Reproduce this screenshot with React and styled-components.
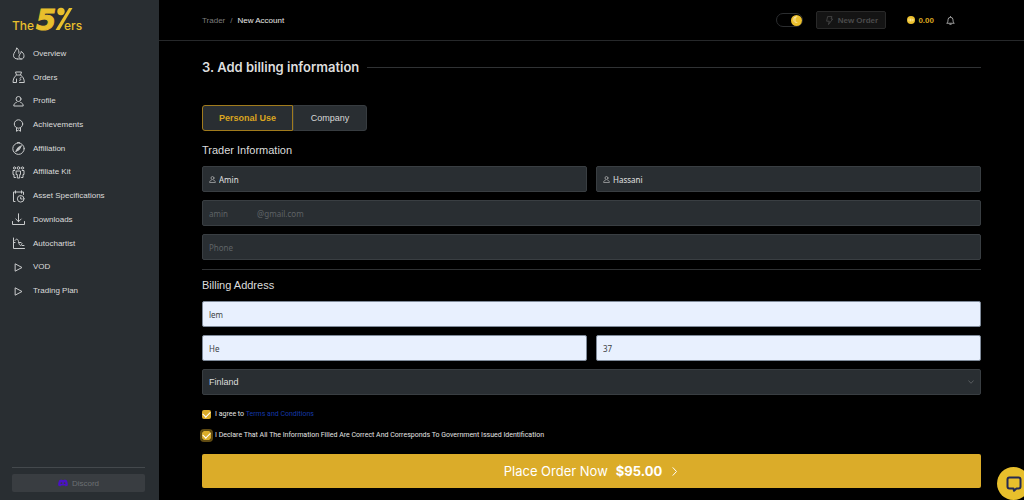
import styled, { createGlobalStyle } from "styled-components";
import { useState } from "react";

const GlobalStyle = createGlobalStyle`
  * {
    box-sizing: border-box;
  }
  body {
    margin: 0;
    background: #000;
    color: #dcdcdc;
    font-family: "Liberation Sans", Arial, sans-serif;
    font-size: 8px;
    overflow-x: hidden;
  }
  button, input, select {
    font-family: inherit;
    margin: 0;
  }
`;

const Page = styled.div`
  display: flex;
  min-height: 100vh;
`;

/* sidebar */
const Sidebar = styled.aside`
  width: 159px;
  flex-shrink: 0;
  display: flex;
  flex-direction: column;
  background: #292e32;
  padding: 0 14px 8px 12px;
`;
const Logo = styled.svg`
  width: 76px;
  height: 38px;
  display: block;
  fill: #e8bf2c;
  font-family: Inter, sans-serif;
`;
const Menu = styled.nav`
  display: grid;
  grid-template-rows: repeat(11, 1fr);
  height: 261px;
  margin-top: 4px;
`;
const MenuLink = styled.a`
  display: flex;
  align-items: center;
  gap: 8px;
  color: #dcdcdc;
  text-decoration: none;
  line-height: 12px;
`;
const MenuIcon = styled.svg`
  width: 13px;
  height: 13px;
  fill: none;
  stroke: #c9cbcc;
  stroke-width: 1;
  stroke-linecap: round;
  stroke-linejoin: round;
`;
const SidebarFooter = styled.div`
  margin-top: auto;
  padding-top: 6px;
  border-top: 1px solid #44494d;
`;
const DiscordButton = styled.button`
  width: 100%;
  height: 18px;
  display: flex;
  align-items: center;
  justify-content: center;
  gap: 4px;
  border: none;
  border-radius: 2px;
  background: #393d41;
  color: #6c7073;
  font-size: 8px;
`;
const DiscordIcon = styled.svg`
  width: 10px;
  height: 8px;
  fill: #4a12c4;
`;

/* header */
const Content = styled.div`
  flex: 1;
  min-width: 0;
`;
const Header = styled.header`
  height: 41px;
  display: flex;
  align-items: center;
  justify-content: space-between;
  border-bottom: 1px solid #26282a;
  padding: 0 69px 0 43px;
`;
const Breadcrumb = styled.nav`
  display: flex;
  gap: 5px;
  color: #7c7c7c;
`;
const Crumb = styled.a`
  color: ${(props) => (props.$current ? "#e8e8e8" : "#7c7c7c")};
  text-decoration: none;
`;
const HeaderActions = styled.div`
  display: flex;
  align-items: center;
`;
const ThemeSwitch = styled.input`
  appearance: none;
  width: 27px;
  height: 14px;
  display: flex;
  align-items: center;
  justify-content: flex-start;
  border: 1px solid #2b2d2f;
  border-radius: 7px;
  &:checked {
    justify-content: flex-end;
  }
  &::after {
    content: "☾";
    width: 11px;
    height: 11px;
    border-radius: 50%;
    background: #ecc02d;
    color: #fff;
    font: bold 9px/11px "DejaVu Sans", sans-serif;
    text-align: center;
  }
`;
const NewOrderButton = styled.button`
  width: 70px;
  height: 18px;
  margin: 0 21px 0 13px;
  padding: 0;
  display: flex;
  align-items: center;
  justify-content: center;
  gap: 4px;
  border: 1px solid #292929;
  border-radius: 2px;
  background: #141414;
  color: #4b4b4b;
  font-size: 8px;
  font-weight: 600;
`;
const SmallIcon = styled.svg`
  width: ${(props) => props.$size || 9}px;
  height: ${(props) => props.$size || 9}px;
  flex-shrink: 0;
  fill: none;
  stroke: currentColor;
  stroke-linecap: round;
  stroke-linejoin: round;
`;
const Balance = styled.span`
  display: flex;
  align-items: center;
  gap: 3px;
  margin-right: 12px;
  color: #dba51f;
  font-weight: 600;
`;
const BellButton = styled.button`
  display: flex;
  padding: 0;
  border: none;
  background: none;
  color: #c4c4c4;
`;

/* form */
const Form = styled.form`
  padding: 16px 43px 12px;
`;
const PageTitle = styled.h1`
  display: flex;
  align-items: center;
  gap: 8px;
  margin: 0 0 28px;
  font-family: Inter, sans-serif;
  font-size: 13px;
  line-height: 20px;
  font-weight: 600;
  color: #dedede;
  &::after {
    content: "";
    flex: 1;
    height: 1px;
    background: #303234;
  }
`;
const Tabs = styled.div`
  display: flex;
  margin-bottom: 11px;
`;
const Tab = styled.button`
  width: ${(props) => (props.$first ? 91 : 74)}px;
  height: 26px;
  padding: 0;
  border: 1px solid ${(props) => (props.$active ? "#a07b1d" : "#373c40")};
  border-radius: ${(props) => (props.$first ? "3px 0 0 3px" : "0 3px 3px 0")};
  background: #292e32;
  color: ${(props) => (props.$active ? "#dba51f" : "#d8d8d8")};
  font-size: 9px;
  font-weight: ${(props) => (props.$active ? 600 : 400)};
`;
const SectionTitle = styled.h2`
  margin: 0 0 8px;
  font-size: 11px;
  line-height: 16px;
  font-weight: 400;
  color: #dcdcdc;
`;
const Fields = styled.div`
  display: grid;
  grid-template-columns: 1fr 1fr;
  gap: 8px 9px;
`;
const Field = styled.div`
  grid-column: ${(props) => (props.$wide ? "1 / -1" : "auto")};
  display: flex;
  align-items: center;
  gap: 3px;
  height: 26px;
  padding: 0 6px;
  border: 1px solid ${(props) => (props.$filled ? "#7f8a99" : "#393e42")};
  border-radius: 2px;
  background: ${(props) => (props.$filled ? "#e8f0fe" : "#292e32")};
  color: #a9abac;
`;
const Input = styled.input`
  flex: 1;
  min-width: 0;
  height: 22px;
  padding: 0;
  border: none;
  outline: none;
  background: none;
  color: ${(props) => props.$color || "#e0e0e0"};
  font-family: "Noto Sans", "Open Sans", sans-serif;
  font-size: 8px;
  &::placeholder {
    color: #5f6366;
  }
`;
const Select = styled.select`
  flex: 1;
  appearance: none;
  border: none;
  outline: none;
  padding: 0;
  background: none;
  color: #dcdcdc;
  font-size: 9px;
`;
const Divider = styled.hr`
  margin: 9px 0 7px;
  border: none;
  height: 1px;
  background: #303234;
`;
const Agreements = styled.div`
  display: flex;
  flex-direction: column;
  gap: 9px;
  margin: 13px 0;
`;
const Agreement = styled.label`
  display: flex;
  align-items: center;
  gap: 4px;
  line-height: 12px;
  font-family: Roboto, sans-serif;
  font-size: 7px;
  color: #e4e4e4;
`;
const Checkbox = styled.input`
  appearance: none;
  width: 9px;
  height: 9px;
  flex-shrink: 0;
  display: grid;
  place-items: center;
  border-radius: 2px;
  background: #dbac29;
  outline: ${(props) => (props.$focused ? "2px solid #5f4a12" : "none")};
  &:checked::after {
    content: "";
    width: 4px;
    height: 6px;
    margin-bottom: 1px;
    border: solid #fff;
    border-width: 0 1px 1px 0;
    transform: rotate(45deg);
  }
`;
const TermsLink = styled.a`
  color: #1439a8;
  text-decoration: none;
`;
const PlaceOrderButton = styled.button`
  width: 100%;
  height: 34px;
  padding: 0;
  display: flex;
  align-items: center;
  justify-content: center;
  gap: 8px;
  border: none;
  border-radius: 2px;
  background: #dbac29;
  color: #fff;
  font-family: Inter, sans-serif;
  font-size: 13px;
`;
const Price = styled.strong`
  font-weight: 700;
`;
const ChatButton = styled.button`
  position: fixed;
  right: -6px;
  bottom: 0;
  width: 33px;
  height: 33px;
  padding: 0;
  display: flex;
  align-items: center;
  justify-content: center;
  border: none;
  border-radius: 50%;
  background: #e8bf2c;
  color: #252a52;
`;

const menuItems = [
  {
    label: "Overview",
    icon: (
      <path d="M5.500 12C3 12 1.500 10.600 1.500 8.300C1.500 5.500 4.500 4 4.700 .8C6.500 2.300 7.300 4.500 6.900 6.300M5.500 12H9.500C11.300 12 12 10.500 12 8.800C12 6.800 10.500 5 9 4.500C9.500 6.500 7 7 7 9.500C7 10.800 7.700 12 9.500 12" />
    ),
  },
  {
    label: "Orders",
    icon: (
      <path d="M4.500 4L3.500 1H9.500L8.500 4H4.500C2.500 5.500 1 8 1 11.500H4.500V8M8.500 4C11 5.500 12.300 8 12.300 11.500H7.500M9 6.500C8 6.500 7.500 7.500 8.300 8C9 8.500 9 9.500 7.500 9.300" />
    ),
  },
  {
    label: "Profile",
    icon: (
      <>
        <circle cx="6.500" cy="4" r="2.500" />
        <path d="M4.300 7.500C2.500 8 1.800 9.300 1.800 11H11.200C11.200 9.300 10.500 8 8.700 7.500" />
      </>
    ),
  },
  {
    label: "Achievements",
    icon: (
      <>
        <circle cx="6.500" cy="5" r="4.200" />
        <path d="M4.500 9V12.300L6.500 11L8.500 12.300V9" />
      </>
    ),
  },
  {
    label: "Affiliation",
    icon: (
      <>
        <circle cx="6.500" cy="6.700" r="5.700" />
        <path d="M9.300 4L7.300 7.600L3.700 9.600L5.700 6Z" fill="#c9cbcc" />
        <path d="M5.500 .6H7.500" />
      </>
    ),
  },
  {
    label: "Affiliate Kit",
    icon: (
      <>
        <circle cx="2.500" cy="2" r="1.100" />
        <circle cx="6.500" cy="2" r="1.300" />
        <circle cx="10.500" cy="2" r="1.100" />
        <path d="M2.800 4.500H1V8.500H2V11.500H3.500M10.200 4.500H12V8.500H11V11.500H9.500M4.500 5H8.500V8.500H7.700V12H5.300V8.500H4.500Z" />
      </>
    ),
  },
  {
    label: "Asset Specifications",
    icon: (
      <>
        <path d="M3 11.500H1.500V2H11.500V4.500M3.500 .8V3.200M9.500 .8V3.200" />
        <circle cx="8.700" cy="8.800" r="3.300" />
        <path d="M8.700 7V9H10.200" />
      </>
    ),
  },
  {
    label: "Downloads",
    icon: <path d="M.5 8.500V11.500H12.500V8.500M6.500 .8V8.500M3.800 6L6.500 8.700L9.200 6" />,
  },
  {
    label: "Autochartist",
    icon: (
      <path d="M1.500 1V11.500H12.500M1.500 5.500H3M3 3.500C4 1.500 6 1.500 6.500 4.500C7 8 8.500 9.500 9.500 7.500L10 6.500M7 5.500H9M10 8.500H12" />
    ),
  },
  { label: "VOD", icon: <path d="M3.500 3L10 6.500L3.500 10Z" /> },
  { label: "Trading Plan", icon: <path d="M3.500 3L10 6.500L3.500 10Z" /> },
];

const UserIcon = () => (
  <SmallIcon viewBox="0 0 8 8" $size={7} strokeWidth="0.9">
    <circle cx="4" cy="2.300" r="1.700" />
    <path d="M2.700 4.700C1.400 5 .7 6 .7 7.400H7.300C7.300 6 6.600 5 5.300 4.700" />
  </SmallIcon>
);

const App = () => {
  const [accountType, setAccountType] = useState("personal");

  return (
    <>
      <GlobalStyle />
      <Page>
        <Sidebar>
          <Logo viewBox="0 0 76 38" role="img" aria-label="The 5%ers">
            <text x="0" y="30" fontSize="12" fontWeight="500">
              The
            </text>
            <text
              x="24"
              y="30"
              fontSize="29"
              fontWeight="700"
              fontStyle="italic"
              fontFamily="DejaVu Sans, sans-serif"
              stroke="#e8bf2c"
              strokeWidth="1"
            >
              5
            </text>
            <circle cx="49" cy="11.500" r="3.700" />
            <path d="M57 8H60.500L47.500 30H43.500Z" />
            <text x="52" y="30" fontSize="12" fontWeight="500">
              ers
            </text>
          </Logo>
          <Menu>
            {menuItems.map((item) => (
              <MenuLink href="#" key={item.label}>
                <MenuIcon viewBox="0 0 13 13">{item.icon}</MenuIcon>
                {item.label}
              </MenuLink>
            ))}
          </Menu>
          <SidebarFooter>
            <DiscordButton type="button">
              <DiscordIcon viewBox="0 0 10 8">
                <path
                  fillRule="evenodd"
                  d="M3.500 .5L3.800 1H6.200L6.500 .5L8.500 1C9.600 2.800 10 4.600 9.800 6.500L7.700 7.500L7 6.500H3L2.300 7.500L.2 6.500C0 4.600 .4 2.800 1.500 1ZM3.400 3.300A.9 .9 0 1 0 3.400 5.100A.9 .9 0 1 0 3.400 3.300ZM6.600 3.300A.9 .9 0 1 0 6.600 5.100A.9 .9 0 1 0 6.600 3.300Z"
                />
              </DiscordIcon>
              Discord
            </DiscordButton>
          </SidebarFooter>
        </Sidebar>

        <Content>
          <Header>
            <Breadcrumb>
              <Crumb href="#">Trader</Crumb>
              <span>/</span>
              <Crumb href="#" $current>
                New Account
              </Crumb>
            </Breadcrumb>
            <HeaderActions>
              <ThemeSwitch type="checkbox" aria-label="Dark mode" defaultChecked />
              <NewOrderButton type="button">
                <SmallIcon viewBox="0 0 9 9" strokeWidth="0.8">
                  <path d="M3 .6H7L6 3H7.700L3.500 8.500L4.300 5.200H2Z" />
                </SmallIcon>
                New Order
              </NewOrderButton>
              <Balance>
                <SmallIcon viewBox="0 0 8 8" $size={8}>
                  <circle cx="4" cy="4" r="4" fill="#ecc02d" stroke="none" />
                  <path d="M2 3V5M3.500 3V5M5 3V5M6 3.500V4.500" stroke="#fff3c4" strokeWidth="0.7" />
                </SmallIcon>
                0.00
              </Balance>
              <BellButton type="button" aria-label="Notifications">
                <SmallIcon viewBox="0 0 9 9" strokeWidth="0.8">
                  <path d="M1 7C1.800 6.300 2 5.500 2 3.800A2.500 2.500 0 0 1 7 3.800C7 5.500 7.200 6.300 8 7ZM3.800 8.300H5.200M4.500 .5V1" />
                </SmallIcon>
              </BellButton>
            </HeaderActions>
          </Header>

          <Form onSubmit={(e) => e.preventDefault()}>
            <PageTitle>3. Add billing information</PageTitle>
            <Tabs>
              <Tab
                type="button"
                $first
                $active={accountType === "personal"}
                onClick={() => setAccountType("personal")}
              >
                Personal Use
              </Tab>
              <Tab
                type="button"
                $active={accountType === "company"}
                onClick={() => setAccountType("company")}
              >
                Company
              </Tab>
            </Tabs>

            <SectionTitle>Trader Information</SectionTitle>
            <Fields>
              <Field>
                <UserIcon />
                <Input aria-label="First name" defaultValue="Amin" />
              </Field>
              <Field>
                <UserIcon />
                <Input aria-label="Last name" defaultValue="Hassani" />
              </Field>
              <Field $wide>
                <Input
                  aria-label="Email"
                  $color="#5f6366"
                  defaultValue={"amin" + "\u00a0".repeat(14) + "@gmail.com"}
                />
              </Field>
              <Field $wide>
                <Input aria-label="Phone" type="tel" placeholder="Phone" />
              </Field>
            </Fields>
            <Divider />

            <SectionTitle>Billing Address</SectionTitle>
            <Fields>
              <Field $wide $filled>
                <Input aria-label="Street" $color="#3c3f44" defaultValue="lem" />
              </Field>
              <Field $filled>
                <Input aria-label="City" $color="#3c3f44" defaultValue="He" />
              </Field>
              <Field $filled>
                <Input aria-label="Postal code" $color="#3c3f44" defaultValue="37" />
              </Field>
              <Field $wide>
                <Select aria-label="Country" defaultValue="Finland">
                  <option>Finland</option>
                </Select>
                <SmallIcon viewBox="0 0 6 6" $size={6} strokeWidth="0.7">
                  <path d="M.7 1.800L3 4.300L5.300 1.800" stroke="#6c7073" />
                </SmallIcon>
              </Field>
            </Fields>

            <Agreements>
              <Agreement>
                <Checkbox type="checkbox" defaultChecked />
                <span>
                  I agree to <TermsLink href="#">Terms and Conditions</TermsLink>
                </span>
              </Agreement>
              <Agreement>
                <Checkbox type="checkbox" defaultChecked $focused />
                I Declare That All The Information Filled Are Correct And Corresponds To
                Government Issued Identification
              </Agreement>
            </Agreements>

            <PlaceOrderButton type="submit">
              Place Order Now <Price>$95.00</Price>
              <SmallIcon viewBox="0 0 9 9" strokeWidth="1">
                <path d="M3 .7L6.500 4.500L3 8.300" />
              </SmallIcon>
            </PlaceOrderButton>
          </Form>
        </Content>
      </Page>
      <ChatButton type="button" aria-label="Open chat">
        <SmallIcon viewBox="0 0 16 16" $size={16} strokeWidth="2">
          <path d="M3.500 1.500H12.500Q14.500 1.500 14.500 3.500V10.500Q14.500 12.500 12.500 12.500H10.500L8 14.800L7.500 12.500H3.500Q1.500 12.500 1.500 10.500V3.500Q1.500 1.500 3.500 1.500Z" />
        </SmallIcon>
      </ChatButton>
    </>
  );
};
export default App;
